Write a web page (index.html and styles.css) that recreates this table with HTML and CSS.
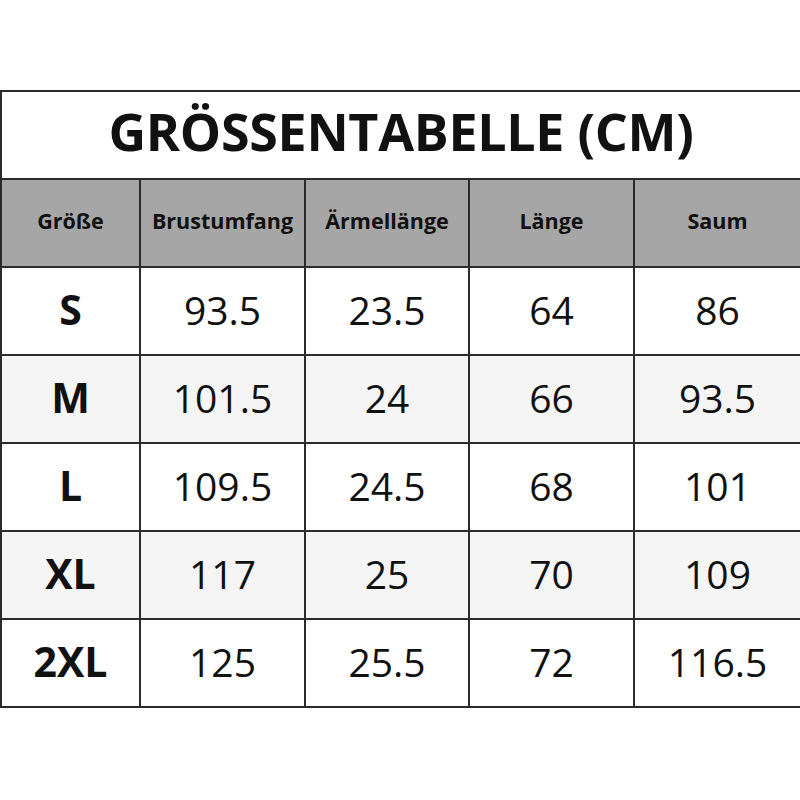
FILE: index.html
```html
<!DOCTYPE html>
<html lang="de">
<head>
<meta charset="utf-8">
<title>Größentabelle</title>
<link rel="stylesheet" href="styles.css">
</head>
<body>
<table class="size-table">
  <colgroup>
    <col class="c1"><col class="c2"><col class="c3"><col class="c4"><col class="c5">
  </colgroup>
  <tr class="title-row"><td colspan="5">GRÖSSENTABELLE (CM)</td></tr>
  <tr class="head-row"><td>Größe</td><td>Brustumfang</td><td>Ärmellänge</td><td>Länge</td><td>Saum</td></tr>
  <tr><td class="size">S</td><td>93.5</td><td>23.5</td><td>64</td><td>86</td></tr>
  <tr class="alt"><td class="size">M</td><td>101.5</td><td>24</td><td>66</td><td>93.5</td></tr>
  <tr><td class="size">L</td><td>109.5</td><td>24.5</td><td>68</td><td>101</td></tr>
  <tr class="alt"><td class="size">XL</td><td>117</td><td>25</td><td>70</td><td>109</td></tr>
  <tr><td class="size">2XL</td><td>125</td><td>25.5</td><td>72</td><td>116.5</td></tr>
</table>
</body>
</html>
```
FILE: styles.css
```css
html, body {
  margin: 0;
  padding: 0;
  background: #ffffff;
}
body {
  padding-top: 90px;
  font-family: "Open Sans", "Noto Sans", "DejaVu Sans", sans-serif;
  color: #111;
}
.size-table {
  border-collapse: collapse;
  width: 800px;
  table-layout: fixed;
}
.c1 { width: 139px; }
.c2 { width: 165px; }
.c3 { width: 164px; }
.c4 { width: 165px; }
.c5 { width: 167px; }
.size-table td {
  border: 2px solid #2b2b2b;
  height: 88px;
  padding: 0 0 4px 0;
  box-sizing: border-box;
  text-align: center;
  vertical-align: middle;
  font-size: 39px;
  font-weight: 400;
}
.title-row td {
  font-size: 52px;
  font-weight: 700;
  letter-spacing: -0.3px;
  padding-bottom: 10px;
}
.head-row td {
  background: #a6a6a6;
  font-size: 21.5px;
  font-weight: 700;
  padding-bottom: 6px;
}
.alt td {
  background: #f5f5f5;
}
.size-table td.size {
  font-weight: 700;
  font-size: 41px;
}
```
